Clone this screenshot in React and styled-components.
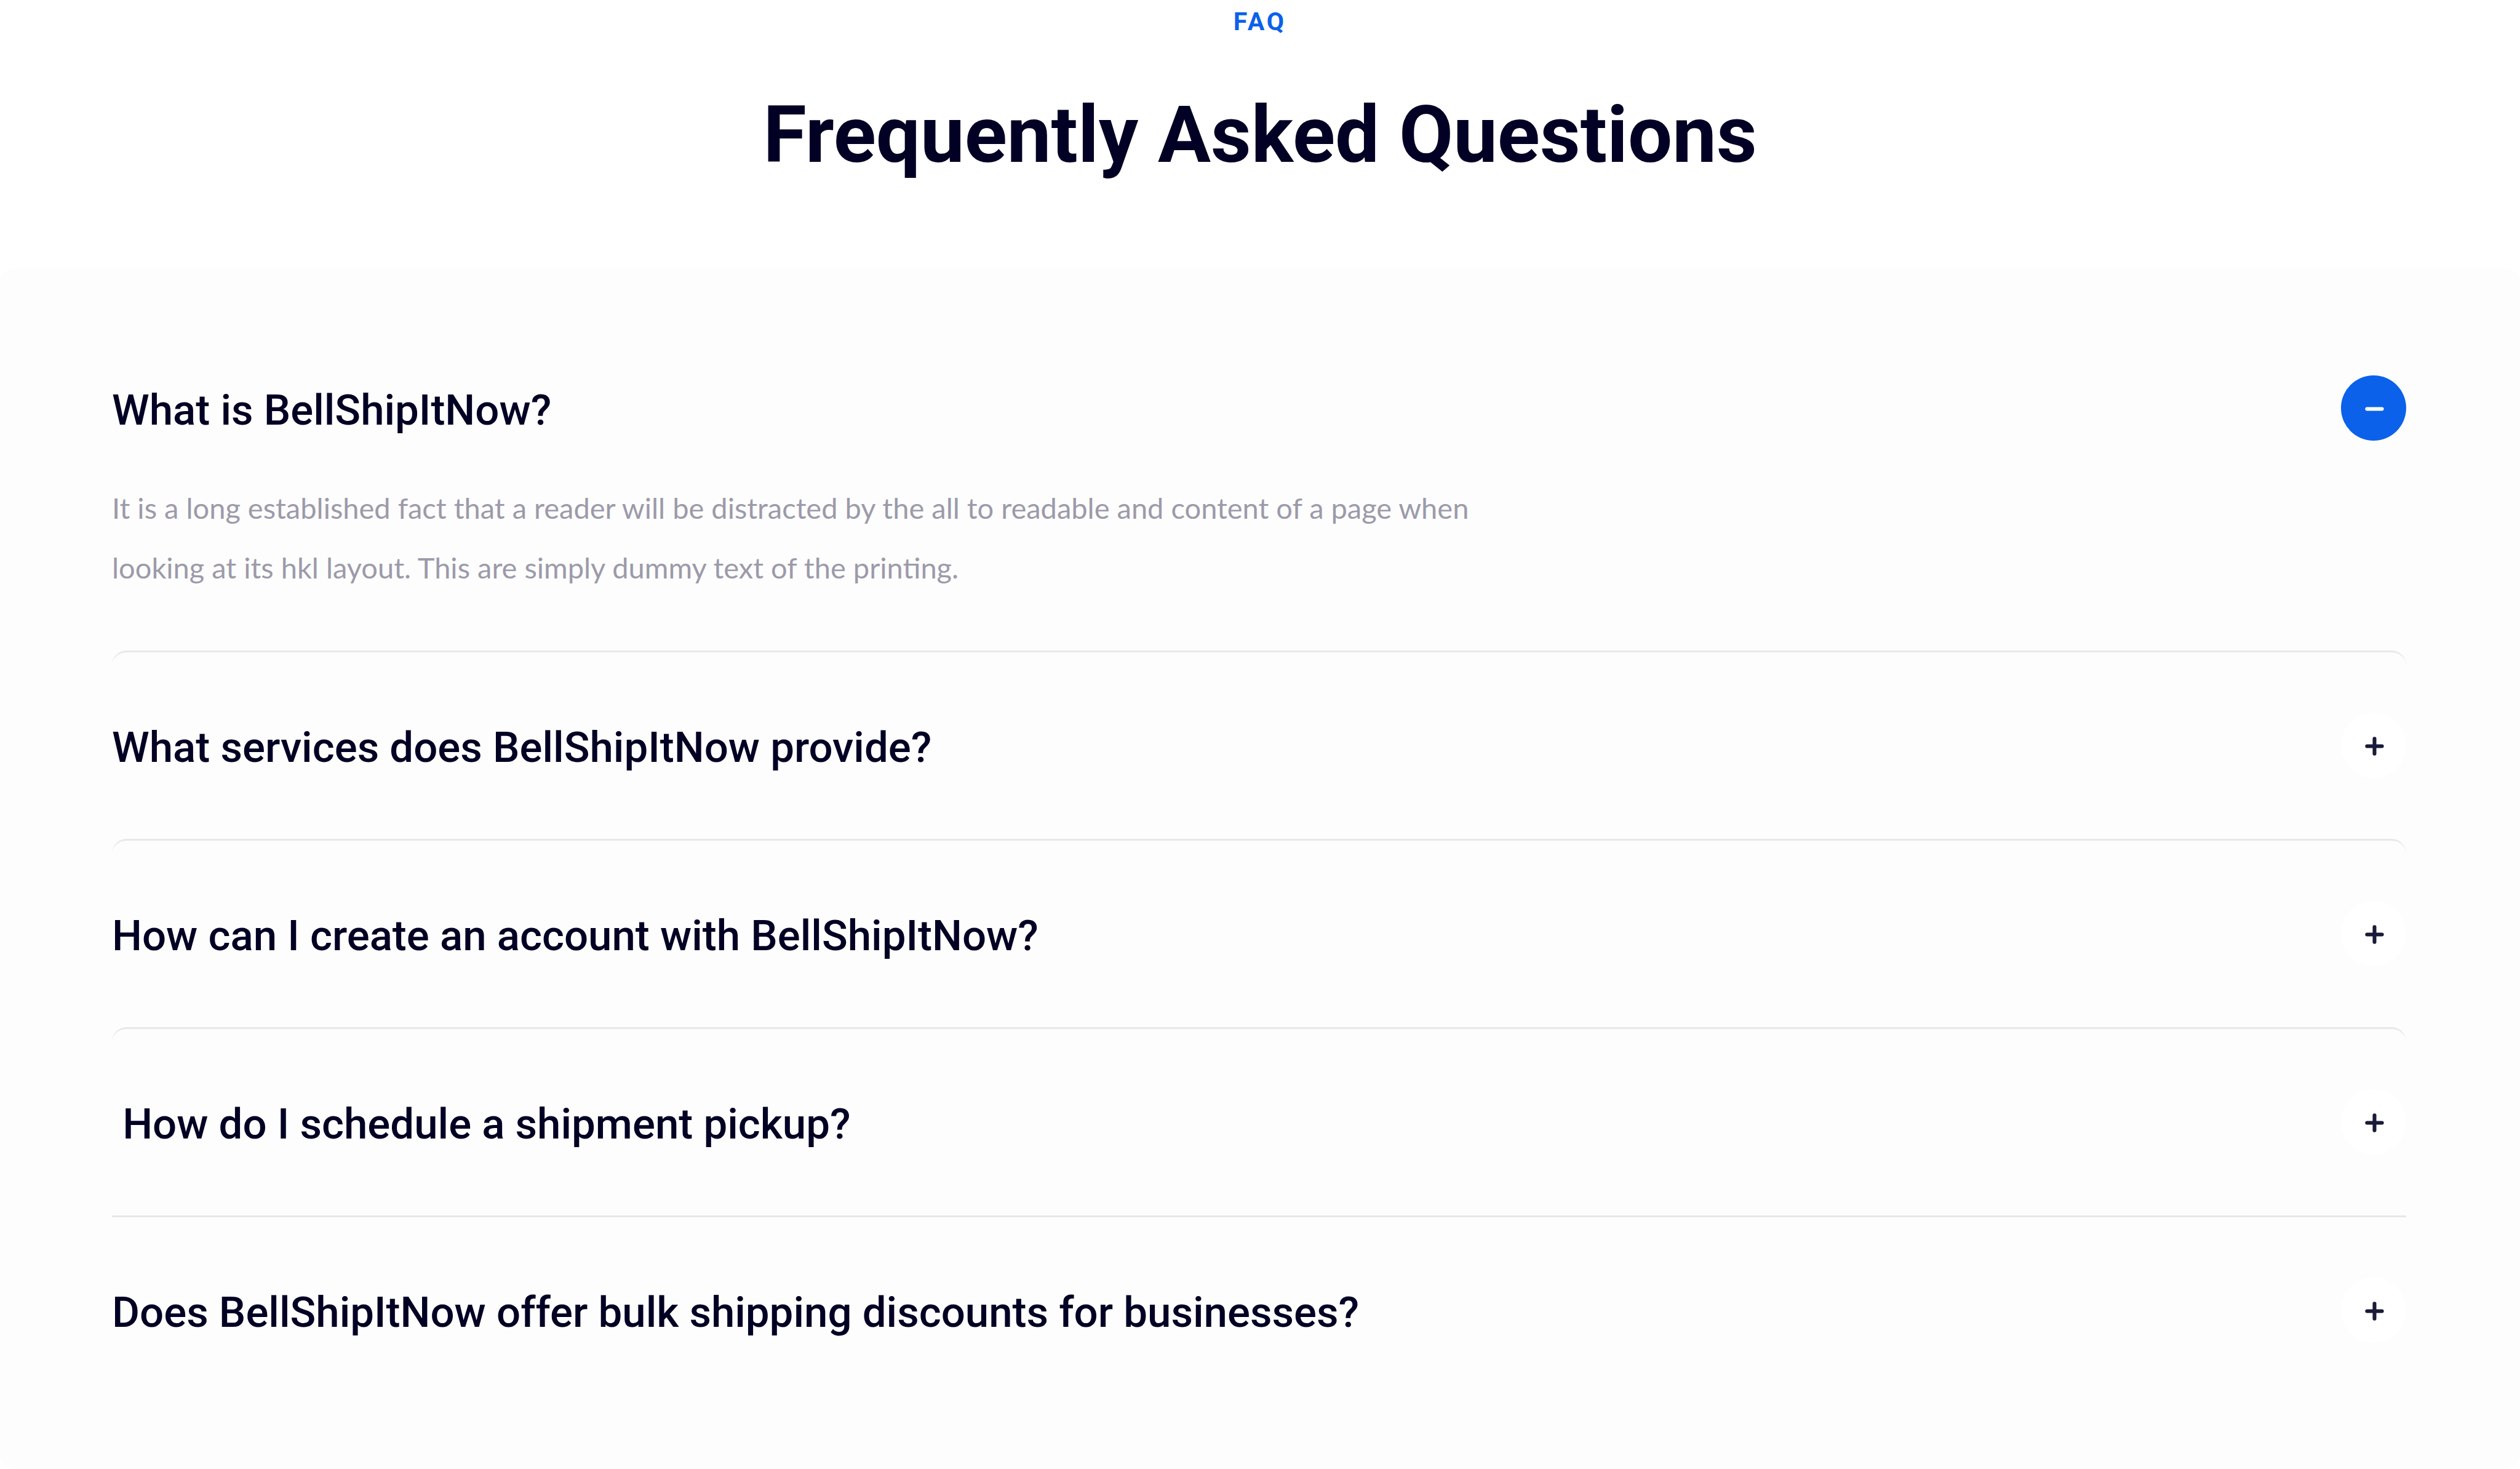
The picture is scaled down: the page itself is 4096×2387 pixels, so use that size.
import React, { useState } from "react";
import styled, { createGlobalStyle } from "styled-components";

const colors = {
  ink: "#020024",
  muted: "#9c9aaa",
  blue: "#0b61ea",
  icon: "#191b38",
  panel: "#fdfdfd",
  lineCool: "#e6e8ea",
  line: "#e7e7e7",
};

const GlobalStyle = createGlobalStyle`
  *, *::before, *::after {
    box-sizing: border-box;
  }
  body {
    margin: 0;
    background: #ffffff;
    color: ${colors.ink};
    font-family: Roboto, "Open Sans", sans-serif;
  }
`;

const Page = styled.main`
  display: flex;
  flex-direction: column;
`;

const SectionHeader = styled.header`
  display: flex;
  flex-direction: column;
  align-items: center;
  gap: 44px;
  margin-bottom: 112px;
  text-align: center;
`;

const Eyebrow = styled.p`
  margin: 0;
  color: ${colors.blue};
  font-size: 41px;
  font-weight: 700;
  line-height: 70px;
  letter-spacing: 4px;
`;

const Title = styled.h1`
  margin: 0;
  font-size: 128px;
  font-weight: 700;
  line-height: 210px;
`;

const Panel = styled.section`
  display: flex;
  flex-direction: column;
  padding: 73px 185px 106px 182px;
  border-radius: 24px;
  background: ${colors.panel};
`;

const Item = styled.article`
  border-top: 3px solid ${(p) => p.$line};
  border-radius: ${(p) => (p.$rounded ? "24px 24px 0 0" : "0")};
`;

const Heading = styled.h2`
  margin: 0;
  font: inherit;
`;

const Trigger = styled.button`
  display: flex;
  align-items: center;
  justify-content: space-between;
  width: 100%;
  padding: ${(p) => (p.$open ? "98px 0 61px" : "98px 0 99px")};
  border: 0;
  background: none;
  color: inherit;
  font-family: inherit;
  font-size: 69px;
  font-weight: 500;
  line-height: 90px;
  text-align: left;
  cursor: pointer;
`;

const Question = styled.span`
  padding-top: 8px;
  white-space: pre-wrap;
`;

const Badge = styled.span`
  display: flex;
  flex: none;
  width: 106px;
  height: 106px;
  border-radius: 50%;
  background: ${(p) => (p.$open ? colors.blue : "#ffffff")};
  color: ${(p) => (p.$open ? "#ffffff" : colors.icon)};
`;

const Answer = styled.p`
  max-width: 2240px;
  margin: 0;
  padding-bottom: 86px;
  color: ${colors.muted};
  font-family: Lato, Roboto, sans-serif;
  font-size: 47px;
  font-weight: 400;
  line-height: 97px;
`;

const placeholder =
  "It is a long established fact that a reader will be distracted by the all to readable and content of a page when looking at its hkl layout. This are simply dummy text of the printing.";

const faqs = [
  { question: "What is BellShipItNow?", line: "transparent", rounded: true },
  { question: "What services does BellShipItNow provide?", line: colors.lineCool, rounded: true },
  { question: "How can I create an account with BellShipItNow?", line: colors.lineCool, rounded: true },
  { question: "\u00a0How do I schedule a shipment pickup?", line: colors.lineCool, rounded: true },
  { question: "Does BellShipItNow offer bulk shipping discounts for businesses?", line: colors.line, rounded: false },
];

function ToggleIcon({ open }) {
  return (
    <Badge $open={open} aria-hidden="true">
      <svg viewBox="0 0 140 140" width="106" height="106" fill="currentColor">
        <rect x="52" y="68" width="40" height="8" rx="4" />
        {!open && <rect x="68" y="52" width="8" height="40" rx="4" />}
      </svg>
    </Badge>
  );
}

function FaqItem({ id, faq, open, onToggle }) {
  return (
    <Item $line={faq.line} $rounded={faq.rounded}>
      <Heading>
        <Trigger type="button" $open={open} aria-expanded={open} aria-controls={id} onClick={onToggle}>
          <Question>{faq.question}</Question>
          <ToggleIcon open={open} />
        </Trigger>
      </Heading>
      {open && <Answer id={id}>{placeholder}</Answer>}
    </Item>
  );
}

export default function App() {
  const [openIndex, setOpenIndex] = useState(0);
  return (
    <>
      <GlobalStyle />
      <Page>
        <SectionHeader>
          <Eyebrow>FAQ</Eyebrow>
          <Title>Frequently Asked Questions</Title>
        </SectionHeader>
        <Panel aria-label="Frequently asked questions">
          {faqs.map((faq, index) => (
            <FaqItem
              key={faq.question}
              id={`answer-${index}`}
              faq={faq}
              open={index === openIndex}
              onToggle={() => setOpenIndex(index === openIndex ? -1 : index)}
            />
          ))}
        </Panel>
      </Page>
    </>
  );
}
